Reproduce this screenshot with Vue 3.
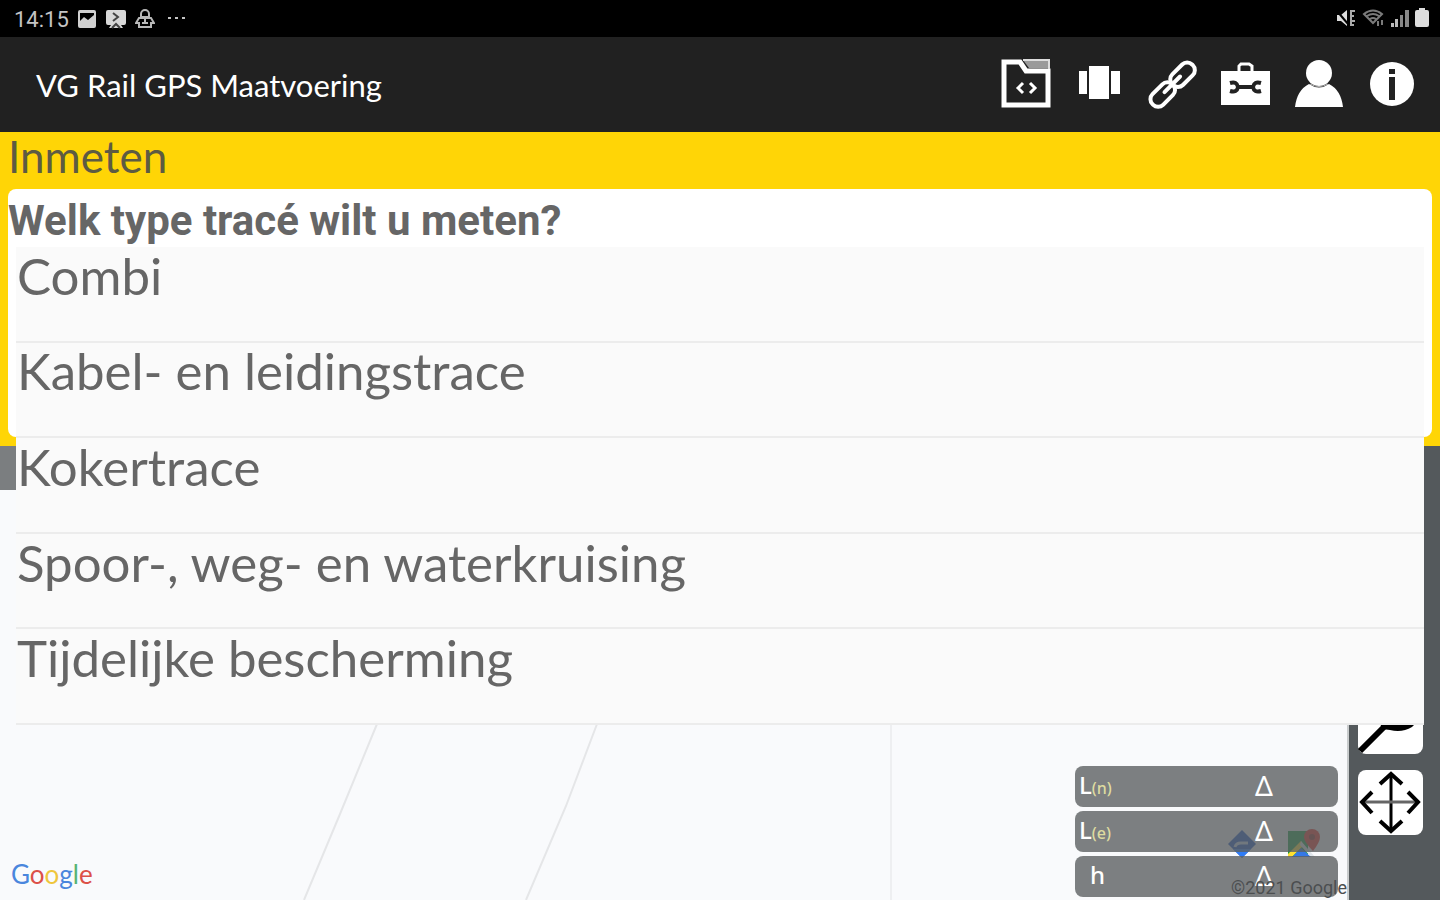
<script setup>
import { ref } from 'vue'

const options = [
  'Combi',
  'Kabel- en leidingstrace',
  'Kokertrace',
  'Spoor-, weg- en waterkruising',
  'Tijdelijke bescherming',
]
const selected = ref('')
const readings = [
  { label: 'L', sub: '(n)' },
  { label: 'L', sub: '(e)' },
  { label: 'h', sub: '' },
]
const brand = [
  { c: 'G', k: 'blue' },
  { c: 'o', k: 'red' },
  { c: 'o', k: 'amber' },
  { c: 'g', k: 'blue' },
  { c: 'l', k: 'green' },
  { c: 'e', k: 'red' },
]
</script>

<template>
  <div class="screen">
    <div class="status">
      <div class="status-side">
        <span class="clock">14:15</span>
        <svg width="20" height="20" viewBox="0 0 20 20"><path fill="#d0d0d0" fill-rule="evenodd" d="M3 1h14q2 0 2 2v14q0 2-2 2H3q-2 0-2-2V3q0-2 2-2zM3 4v8l4-4 4 3 6-5V4z" /></svg>
        <svg width="22" height="20" viewBox="0 0 22 20"><path fill="#d8d8d8" d="M3 1h16q2 0 2 2v11q0 2-2 2h-3l2 3H4l2-3H3q-2 0-2-2V3q0-2 2-2z" /><path fill="none" stroke="#444" stroke-width="2" d="M8 4l5 4-5 4M7 19l4-4 4 4" /></svg>
        <svg width="20" height="20" viewBox="0 0 20 20" fill="none" stroke="#b8b8b8" stroke-width="2"><path d="M6 8V5a4 4 0 0 1 8 0v3M5 8h10M4 9l-3 5h3v4h12v-4h3l-3-5z" /><path d="M7 14h6M10 10v4" /></svg>
        <svg class="more" width="20" height="20" viewBox="0 0 20 20" fill="#c4c4c4"><path d="M1 8h3v2H1zM8 8h3v2H8zM15 8h3v2h-3z" /></svg>
      </div>
      <div class="status-side signals">
        <svg width="22" height="20" viewBox="0 0 22 20"><path fill="#ddd" d="M1 7h4l6-5v16l-6-5H1z" /><path stroke="#000" stroke-width="2" d="M1 3l11 13" /><path stroke="#aaa" stroke-width="2" fill="none" d="M15 2v16M15 3h4M15 8h3M15 13h4M15 17h3" /></svg>
        <svg width="24" height="20" viewBox="0 0 24 20" fill="none" stroke="#7a7a7a" stroke-width="2"><path d="M2 6q9-7 18 0L11 15zM5 8q6-4 12 0M8 11q3-2 6 0" /><path d="M16 13v5M20 12v5" /></svg>
        <svg width="20" height="20" viewBox="0 0 20 20"><path fill="#bbb" d="M1 15h3v4H1zM5 11h3v8H5z" /><path fill="#888" d="M10 7h3v12h-3zM15 2h4v17h-4z" /></svg>
        <svg width="16" height="20" viewBox="0 0 16 20"><path fill="#ddd" d="M5 0h6v2h2q2 0 2 2v13q0 2-2 2H3q-2 0-2-2V4q0-2 2-2h2z" /></svg>
      </div>
    </div>

    <header class="appbar">
      <h1>VG Rail GPS Maatvoering</h1>
      <nav class="actions" aria-label="Acties">
        <button type="button" aria-label="Projecten">
          <svg viewBox="0 0 52 52"><path fill="#9a9a9a" d="M22 1h26v8H28z" /><path fill="none" stroke="#fff" stroke-width="5" d="M3 3h16l6 9h22v34H3z" /><path fill="none" stroke="#ddd" stroke-width="2" d="M22 1h26v9" /><path fill="none" stroke="#fff" stroke-width="3" d="M22 24l-5 5 5 5M29 24l5 5-5 5" /></svg>
        </button>
        <button type="button" aria-label="Kaarten">
          <svg viewBox="0 0 52 52" fill="#fff"><path d="M15 7h20v33H15zM5 12h8v23H5zM37 12h9v23h-9z" /></svg>
        </button>
        <button type="button" aria-label="Koppelingen">
          <svg viewBox="0 0 52 52" fill="none" stroke="#fff" stroke-width="4"><g transform="rotate(-45 26 26)"><rect x="-2" y="18" width="28" height="15" rx="7" /><rect x="26" y="18" width="28" height="15" rx="7" /><path d="M15 25h22" stroke-linecap="round" /></g></svg>
        </button>
        <button type="button" aria-label="Gereedschap">
          <svg viewBox="0 0 52 52"><path fill="#fff" d="M1 12h49v34H1z" /><path fill="none" stroke="#fff" stroke-width="3" d="M19 12V7l2-2h8l3 2v5" /><path stroke="#222" stroke-width="4" d="M18 28h16" /><path fill="none" stroke="#222" stroke-width="4" d="M10 24q7-2 8 4-1 6-8 4M41 24q-7-2-8 4 1 6 8 4" /></svg>
        </button>
        <button type="button" aria-label="Account">
          <svg viewBox="0 0 52 52"><path fill="#fff" d="M2 48q2-17 14-23 10 7 20 0 12 6 14 23z" /><circle cx="26" cy="14" r="13" fill="#fff" /><path fill="none" stroke="#bbb" stroke-width="1" d="M17 25q9 5 18 0" /></svg>
        </button>
        <button type="button" aria-label="Informatie">
          <svg viewBox="0 0 52 52"><circle cx="26" cy="25" r="22" fill="#fff" /><path fill="#222" d="M23 10h6v5h-6zM23 18h6v23h-6z" /></svg>
        </button>
      </nav>
    </header>

    <section class="measure">
      <h2>Inmeten</h2>
      <div class="card">
        <p id="question" class="question">Welk type tracé wilt u meten?</p>
        <ul class="options" aria-labelledby="question">
          <li v-for="option in options" :key="option">
            <button type="button" @click="selected = option">{{ option }}</button>
          </li>
        </ul>
      </div>
    </section>

    <main class="workspace">
      <div class="map">
        <div class="map-strip"></div>
        <svg class="roads" viewBox="0 0 1347 454" preserveAspectRatio="xMinYMax slice" fill="none" stroke="#e5e6e8" stroke-width="2"><path d="M377 278L340 368 304 454M597 278L566 360 526 454" /><path d="M891 278v176" stroke="#eeeff1" /></svg>
        <div class="brand"><span v-for="(l, i) in brand" :key="i" :class="l.k">{{ l.c }}</span></div>
        <div class="map-links">
          <svg width="28" height="28" viewBox="0 0 28 28"><path fill="#1450c8" d="M14 0l14 14-14 14L0 14z" /><path fill="#2f7cf6" d="M5 19h18l-9 9z" /><path fill="none" stroke="#c4d4ee" stroke-width="3" d="M7 17q1-4 6-4h7" /></svg>
          <svg width="34" height="30" viewBox="0 0 34 30"><path fill="#109a3c" d="M2 2h20v26H2z" /><path fill="#ffe030" d="M2 25l13-13 3 4L6 28H2z" /><path fill="#dfe5ea" d="M15 12l14 16h-4L14 16z" /><path fill="#3578e5" d="M6 28l9-9 10 9z" /><path fill="#e82a22" d="M26 0a8 8 0 0 1 8 8q0 5-7 14Q18 13 18 8a8 8 0 0 1 8-8z" /><circle cx="26" cy="8" r="3" fill="#8c2722" /></svg>
        </div>
        <div class="readings">
          <div v-for="r in readings" :key="r.label + r.sub" class="reading">
            <span class="name" :class="{ single: !r.sub }">{{ r.label }}<small v-if="r.sub">{{ r.sub }}</small></span>
            <span class="delta">Δ</span>
          </div>
        </div>
        <span class="copyright">©2021 Google</span>
      </div>
      <aside class="tools">
        <button type="button" aria-label="Lijn tekenen">
          <svg viewBox="0 0 65 65" fill="none" stroke="#000"><path stroke-width="6" d="M2 62L27 37" /><path fill="#000" stroke="none" d="M22 34h36l-4 4q-10 6-22 3l-8-1z" /></svg>
        </button>
        <button type="button" aria-label="Verplaatsen">
          <svg viewBox="0 0 65 65" fill="none" stroke="#000" stroke-width="4"><path d="M33 5v56" stroke-width="3" /><path d="M5 32h55" stroke="#666" stroke-width="3" /><path d="M22 14L33 4l11 10M22 51l11 10 11-10M14 22L4 32l10 11M50 22l10 10-10 11" /></svg>
        </button>
      </aside>
    </main>
  </div>
</template>

<style>
body {
  margin: 0;
}
</style>

<style scoped>
.screen {
  display: flex;
  flex-direction: column;
  min-height: 100vh;
  font-family: Lato, 'Open Sans', sans-serif;
  color: #666;
}
button {
  border: 0;
  padding: 0;
  font: inherit;
  color: inherit;
  cursor: pointer;
}
h1,
h2,
p,
ul {
  margin: 0;
  padding: 0;
  font-weight: 400;
}
.status {
  display: flex;
  justify-content: space-between;
  height: 37px;
  padding: 0 10px 0 14px;
  background: #000;
}
.status-side {
  display: flex;
  align-items: center;
  gap: 8px;
}
.signals {
  gap: 4px;
  padding-bottom: 2px;
}
.clock {
  font: 22px/26px Roboto, sans-serif;
  padding-top: 2px;
  color: #c4c4c4;
}
.more {
  margin-left: 4px;
}
.appbar {
  display: flex;
  align-items: center;
  justify-content: space-between;
  height: 95px;
  padding: 0 22px 0 36px;
  background: #212121;
}
h1 {
  font-size: 31px;
  line-height: 36px;
  color: #fff;
}
.actions {
  display: flex;
  gap: 21px;
}
.actions button {
  width: 52px;
  height: 52px;
  background: none;
}
.actions svg,
.tools svg {
  display: block;
  width: 100%;
  height: 100%;
  overflow: visible;
}
.measure {
  padding: 0 8px 9px;
  background: #ffd506;
}
h2 {
  font-size: 44px;
  line-height: 48px;
  padding-bottom: 9px;
  color: #5d5b42;
}
.card {
  position: relative;
  z-index: 2;
  min-height: 248px;
  border-radius: 8px;
  background: #fff;
}
.question {
  font: 700 42px/64px Roboto, sans-serif;
}
.options {
  position: absolute;
  top: 58px;
  left: 8px;
  right: 8px;
  display: grid;
  grid-template-rows: repeat(5, 1fr);
  height: 478px;
  list-style: none;
  background: #fafafa;
}
.options li {
  border-bottom: 2px solid #ececec;
}
.options button {
  display: block;
  width: 100%;
  height: 100%;
  padding: 0 1px 36px;
  background: none;
  font-size: 51px;
  line-height: 56px;
  text-align: left;
}
.workspace {
  flex: 1;
  display: grid;
  grid-template-columns: 1fr 93px;
}
.map {
  position: relative;
  background: #f9fafc;
}
.map-strip {
  height: 44px;
  background: #7b7e80;
}
.roads {
  position: absolute;
  inset: 0;
  width: 100%;
  height: 100%;
}
.brand {
  position: absolute;
  left: 11px;
  bottom: 10px;
  font-size: 26px;
  line-height: 32px;
}
.blue { color: #4a86dd; }
.red { color: #dc5048; }
.amber { color: #efc63c; }
.green { color: #58b473; }
.map-links {
  position: absolute;
  right: 27px;
  bottom: 41px;
  display: flex;
  align-items: center;
  gap: 30px;
}
.readings {
  position: absolute;
  right: 9px;
  bottom: 3px;
  display: grid;
  gap: 4px;
  width: 263px;
}
.reading {
  display: flex;
  align-items: center;
  justify-content: space-between;
  height: 41px;
  padding: 0 65px 4px 4px;
  box-sizing: border-box;
  border-radius: 8px;
  background: rgba(92, 96, 98, 0.8);
  font: 24px 'Noto Sans', sans-serif;
  color: #fff;
}
.name {
  font-weight: 500;
}
.name small {
  font-size: 16px;
  color: #dedba0;
}
.single {
  padding-left: 11px;
}
.delta {
  font-size: 28px;
}
.copyright {
  position: absolute;
  right: 0;
  bottom: 0;
  font: 18px/24px Roboto, sans-serif;
  color: #4b4e50;
}
.tools {
  display: flex;
  flex-direction: column;
  align-items: center;
  justify-content: flex-end;
  gap: 16px;
  padding: 0 8px 65px 0;
  border-left: 2px solid #c9cccd;
  box-sizing: border-box;
  background: #54595c;
}
.tools button {
  width: 65px;
  height: 65px;
  border-radius: 8px;
  background: #fff;
}
</style>
